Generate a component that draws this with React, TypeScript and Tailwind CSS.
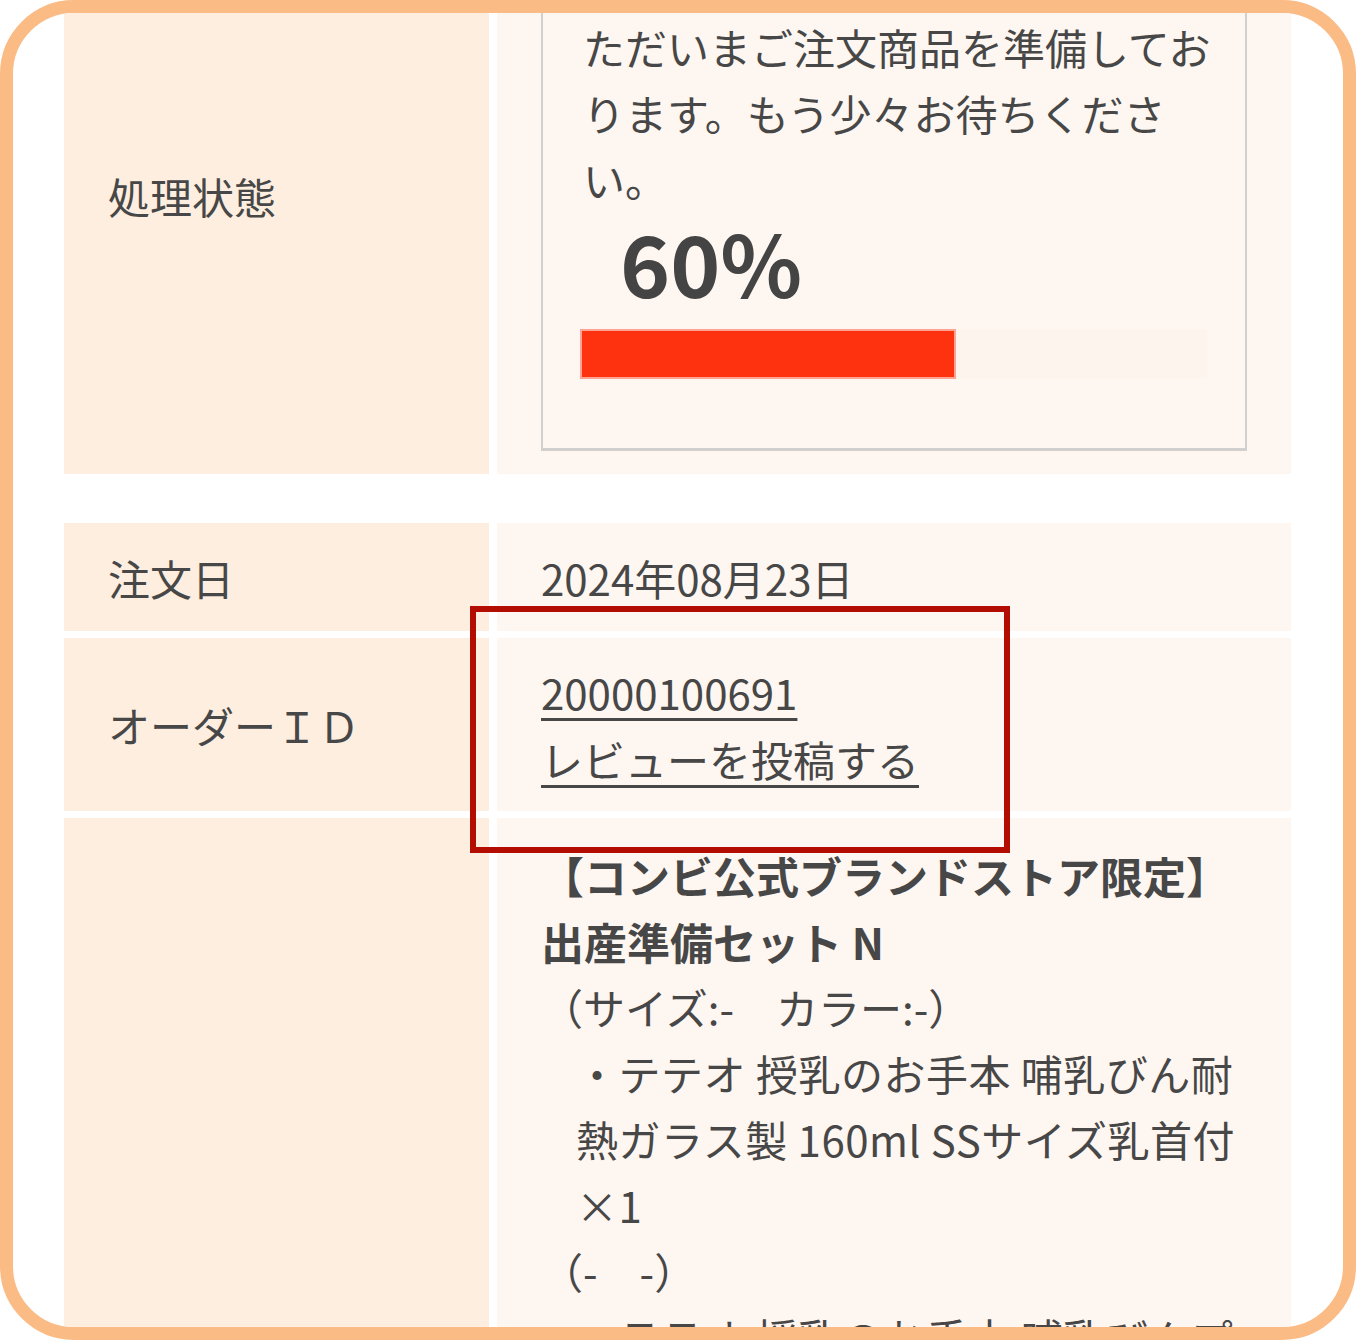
import React from "react";

const font = { fontFamily: '"Noto Sans CJK JP", "Noto Sans", sans-serif' };

export default function App() {
  return (
    <div className="w-[1356px] h-[1340px] bg-white" style={font}>
      <div className="relative w-full h-full border-[13px] border-[#fbbb85] rounded-[74px] overflow-hidden bg-white text-[#474747]">
        <div className="-mt-[95px] pl-[51px] pr-[52px] flex flex-col">
          {/* Row 1 */}
          <div className="grid grid-cols-[425px_794px] gap-x-[8px]">
            <div className="bg-[#fdeee0] flex items-center pl-[44px] text-[42px] leading-[60px]">
              処理状態
            </div>
            <div className="bg-[#fef6f0] px-[44px] py-[23px]">
              <div className="border-2 border-b-[3px] border-[#d2d0ce] pl-[40px] pt-[71px] pb-[69px]">
                <div className="text-[42px] leading-[66px]">
                  ただいまご注文商品を準備してお
                  <br />
                  ります。もう少々お待ちくださ
                  <br />
                  い。
                </div>
                <div className="ml-[37px] text-[85px] leading-[98px] font-bold text-[#444444]">
                  60%
                </div>
                <div className="-ml-[3px] mt-[19px] w-[627px] h-[50px] bg-[#fdf4ee]">
                  <div className="h-full w-[60%] bg-[#ff3210] border-2 border-[#ffa494]" />
                </div>
              </div>
            </div>
          </div>

          {/* Row 2 */}
          <div className="mt-[49px] grid grid-cols-[425px_794px] gap-x-[8px] h-[108px]">
            <div className="bg-[#fdeee0] flex items-center pl-[44px] text-[42px]">
              注文日
            </div>
            <div className="bg-[#fef6f0] flex items-center pl-[44px] text-[42px]">
              2024年08月23日
            </div>
          </div>

          {/* Row 3 */}
          <div className="mt-[7px] grid grid-cols-[425px_794px] gap-x-[8px] h-[173px]">
            <div className="bg-[#fdeee0] flex items-center pl-[44px] text-[42px]">
              オーダーＩＤ
            </div>
            <div className="bg-[#fef6f0] flex flex-col justify-center pl-[44px] text-[42px] leading-[67px]">
              <div>
                <span className="underline decoration-[3px] underline-offset-[8px]">20000100691</span>
              </div>
              <div>
                <span className="underline decoration-[3px] underline-offset-[8px]">レビューを投稿する</span>
              </div>
            </div>
          </div>

          {/* Row 4 */}
          <div className="mt-[7px] grid grid-cols-[425px_794px] gap-x-[8px] h-[600px]">
            <div className="bg-[#fdeee0]" />
            <div className="bg-[#fef6f0] pl-[44px] pt-[24px] text-[42px] leading-[66px] whitespace-nowrap">
              <div className="font-bold text-[43px]">
                【コンビ公式ブランドストア限定】
                <br />
                出産準備セット N
              </div>
              <div>（サイズ:-　カラー:-）</div>
              <div className="pl-[35px] tracking-[0.5px]">
                ・テテオ 授乳のお手本 哺乳びん耐
                <br />
                熱ガラス製 160ml SSサイズ乳首付
                <br />
                ×1
              </div>
              <div>（-　-）</div>
              <div className="pl-[35px] tracking-[0.5px]">・テテオ 授乳のお手本 哺乳びんプ</div>
            </div>
          </div>
        </div>

        {/* highlight annotation */}
        <div className="absolute left-[457px] top-[593px] w-[540px] h-[247px] border-[6px] border-[#b30c00]" />
      </div>
    </div>
  );
}
